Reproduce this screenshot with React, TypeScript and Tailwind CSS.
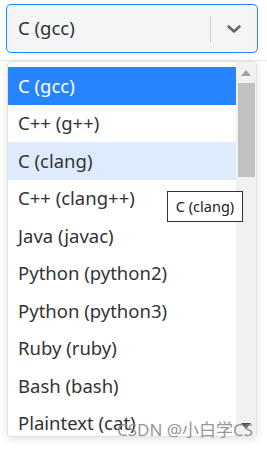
import React from "react";

const items = [
  "C (gcc)",
  "C++ (g++)",
  "C (clang)",
  "C++ (clang++)",
  "Java (javac)",
  "Python (python2)",
  "Python (python3)",
  "Ruby (ruby)",
  "Bash (bash)",
  "Plaintext (cat)",
];

export default function App() {
  return (
    <div
      className="relative w-[267px] h-[450px] overflow-hidden bg-white"
      style={{ fontFamily: '"Noto Sans", "Noto Sans CJK SC", sans-serif' }}
    >
      {/* faint page line */}
      <div className="absolute left-0 right-0 top-[60px] h-px bg-[#ececec]" />

      {/* control */}
      <div className="relative ml-[6px] mt-[4px] flex h-[49px] w-[252px] items-center rounded-[5px] border border-[#2684ff] bg-[#f4f5f7]">
        <div className="flex-1 pl-[11px] text-[18.5px] leading-none text-[#333]">C (gcc)</div>
        <div className="h-[26px] w-px bg-[#cccccc]" />
        <div className="flex w-[46px] items-center justify-center">
          <svg width="16" height="10" viewBox="0 0 16 10">
            <path d="M2.5 2.5 L8 7.5 L13.5 2.5" fill="none" stroke="#666" strokeWidth="2.6" strokeLinecap="round" strokeLinejoin="round" />
          </svg>
        </div>
      </div>

      {/* menu */}
      <div className="absolute left-[7px] top-[61px] flex h-[376px] w-[250px] overflow-hidden rounded-[4px] border border-[#e2e2e2] bg-white shadow-[0_2px_8px_rgba(0,0,0,0.12)]">
        <div className="flex-1 pt-[5px]">
          {items.map((it, i) => (
            <div
              key={it}
              className={
                "flex h-[37.5px] items-center whitespace-nowrap pl-[10px] text-[18.5px] " +
                (i === 0
                  ? "bg-[#2684ff] text-white"
                  : i === 2
                  ? "bg-[#deebff] text-[#333]"
                  : "text-[#333]")
              }
            >
              {it}
            </div>
          ))}
        </div>
        {/* scrollbar */}
        <div className="relative flex w-[20px] flex-col bg-[#f1f1f1]">
          <div className="flex h-[21px] items-center justify-center">
            <svg width="10" height="6" viewBox="0 0 10 6">
              <path d="M0 6 L5 0 L10 6 Z" fill="#a3a3a3" />
            </svg>
          </div>
          <div className="ml-[2px] mr-[1px] h-[94px] bg-[#c1c1c1]" />
          <div className="flex-1" />
          <div className="flex h-[21px] items-center justify-center">
            <svg width="10" height="6" viewBox="0 0 10 6">
              <path d="M0 0 L5 6 L10 0 Z" fill="#505050" />
            </svg>
          </div>
        </div>
      </div>

      {/* tooltip */}
      <div className="absolute left-[167px] top-[191px] flex h-[31px] w-[76px] items-center justify-center border border-[#333] bg-white text-[14.5px] text-[#222]">
        C (clang)
      </div>

      {/* watermark */}
      <div className="absolute left-[117px] top-[420px] whitespace-nowrap text-[17px] leading-[20px] text-[#8c8c8c] opacity-90">
        CSDN @小白学CS
      </div>
    </div>
  );
}
